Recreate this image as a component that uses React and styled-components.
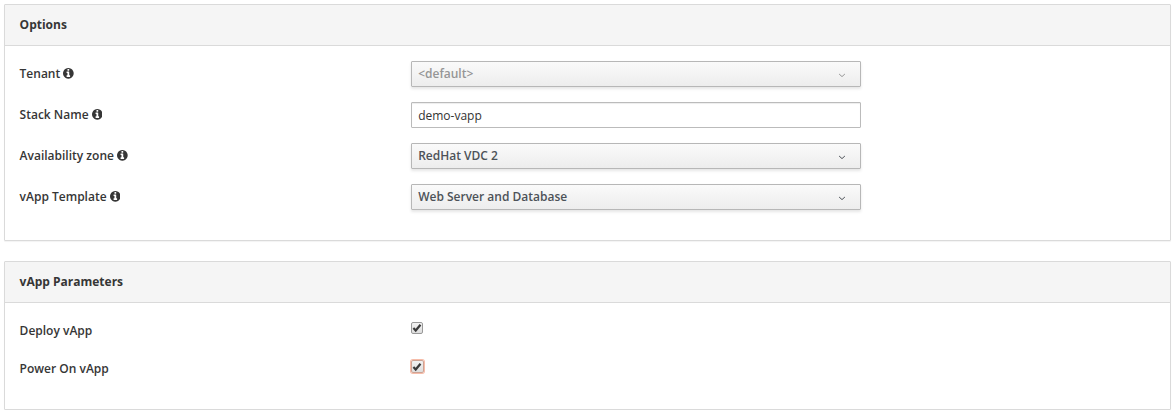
import React from "react";
import styled, { createGlobalStyle, css } from "styled-components";

const GlobalStyle = createGlobalStyle`
  *, *::before, *::after { box-sizing: border-box; }
  body {
    margin: 0;
    background: #fff;
    color: #363636;
    font: 12px/20px "Open Sans", "Noto Sans", sans-serif;
  }
`;

const Page = styled.main`
  display: flex;
  flex-direction: column;
  gap: 20px;
  padding: 4px 5px 0 4px;
`;

const Panel = styled.section`
  height: ${(p) => p.$height}px;
  border: 1px solid #dadada;
  border-radius: 1px;
  background: #fff;
  box-shadow: 0 1px 1px rgba(0, 0, 0, 0.05);
`;

const PanelHeader = styled.header`
  height: 41px;
  padding: 10px 14.6px 0;
  background: #f5f5f5;
  border-bottom: 1px solid #dadada;
`;

const PanelTitle = styled.h3`
  margin: 0;
  font-size: 12px;
  line-height: 20px;
  font-weight: 700;
`;

const PanelBody = styled.div`
  display: flex;
  flex-direction: column;
  gap: ${(p) => p.$gap}px;
  padding: ${(p) => p.$top}px 14.6px 0;
`;

const Row = styled.div`
  display: grid;
  grid-template-columns: 391.4px 450px;
  align-items: start;
  height: 26px;
`;

const Label = styled.label`
  display: flex;
  align-items: center;
  gap: 3px;
  height: 20px;
  margin: ${(p) => p.$offset ?? 3}px 0 0 0;
  font-weight: 600;
`;

const control = css`
  width: 450px;
  height: 26px;
  padding: 0 7px;
  border: 1px solid #bbb;
  border-radius: 1px;
  font: inherit;
`;

const SelectButton = styled.button`
  ${control}
  display: flex;
  align-items: center;
  justify-content: space-between;
  padding: 0 14px 1px 6.2px;
  border-color: #b7b7b7;
  background: linear-gradient(#fafafa, #ededed);
  box-shadow: 0 2px 3px rgba(3, 3, 3, 0.1);
  color: ${(p) => (p.disabled ? "#969696" : "#4d5258")};
  font-weight: 600;
`;

const TextInput = styled.input`
  ${control}
  padding: 1px 6.2px 0;
  background: #fff;
  box-shadow: inset 0 1px 1px rgba(3, 3, 3, 0.075);
  color: #333;
  outline: none;
`;

const CheckMark = styled.span`
  display: flex;
  align-items: center;
  justify-content: center;
  width: 12px;
  height: 12px;
  margin-top: 3px;
  border: 1px solid #999;
  border-radius: 2px;
  background: linear-gradient(#f2f2f2, #dedede);
  ${(p) => p.$focused && css`
    width: 13px;
    height: 13px;
    border-color: #cda394;
    box-shadow: 0 0 0 1px #f6bca9;
  `}
`;

const InfoSvg = styled.svg`
  flex: none;
  margin-top: -0.5px;
`;

const ArrowSvg = styled.svg`
  flex: none;
  margin-top: 3px;
`;

const InfoIcon = () => (
  <InfoSvg width="10.7" height="10.7" viewBox="0 128 1536 1536" aria-hidden="true">
    <path
      fill="#363636"
      d="M1024 1376v-160q0-14-9-23t-23-9h-96v-512q0-14-9-23t-23-9h-320q-14 0-23 9t-9 23v160q0 14 9 23t23 9h96v320h-96q-14 0-23 9t-9 23v160q0 14 9 23t23 9h448q14 0 23-9t9-23zm-128-896v-160q0-14-9-23t-23-9h-192q-14 0-23 9t-9 23v160q0 14 9 23t23 9h192q14 0 23-9t9-23zm640 416q0 209-103 385.5t-279.5 279.5-385.5 103-385.5-103-279.5-279.5-103-385.5 103-385.5 279.5-279.5 385.5-103 385.5 103 279.5 279.5 103 385.5z"
    />
  </InfoSvg>
);

const Chevron = () => (
  <ArrowSvg width="8" height="5" viewBox="0 0 8 5" fill="none" aria-hidden="true">
    <path d="M1.1 1 4 3.6 6.9 1" stroke="currentColor" strokeWidth="1" />
  </ArrowSvg>
);

const Tick = () => (
  <svg width="10" height="10" viewBox="0 0 10 10" fill="none" aria-hidden="true">
    <path d="M1.4 5.1 3.7 7.5 8.5 1.7" stroke="#3a3a3a" strokeWidth="2.2" />
  </svg>
);

const SelectField = ({ label, value, disabled }) => (
  <Row>
    <Label>{label}<InfoIcon /></Label>
    <SelectButton type="button" disabled={disabled}>
      <span>{value}</span>
      <Chevron />
    </SelectButton>
  </Row>
);

const CheckField = ({ label, focused }) => (
  <Row>
    <Label $offset={2}>{label}</Label>
    <CheckMark role="checkbox" aria-checked="true" aria-label={label} $focused={focused}>
      <Tick />
    </CheckMark>
  </Row>
);

export default function App() {
  return (
    <>
      <GlobalStyle />
      <Page>
        <Panel $height={237}>
          <PanelHeader><PanelTitle>Options</PanelTitle></PanelHeader>
          <PanelBody $gap={15} $top={15}>
            <SelectField label="Tenant" value="<default>" disabled />
            <Row>
              <Label htmlFor="stack-name">Stack Name<InfoIcon /></Label>
              <TextInput id="stack-name" defaultValue="demo-vapp" />
            </Row>
            <SelectField label="Availability zone" value="RedHat VDC 2" />
            <SelectField label="vApp Template" value="Web Server and Database" />
          </PanelBody>
        </Panel>
        <Panel $height={149}>
          <PanelHeader><PanelTitle>vApp Parameters</PanelTitle></PanelHeader>
          <PanelBody $gap={12} $top={16}>
            <CheckField label="Deploy vApp" />
            <CheckField label="Power On vApp" focused />
          </PanelBody>
        </Panel>
      </Page>
    </>
  );
}
